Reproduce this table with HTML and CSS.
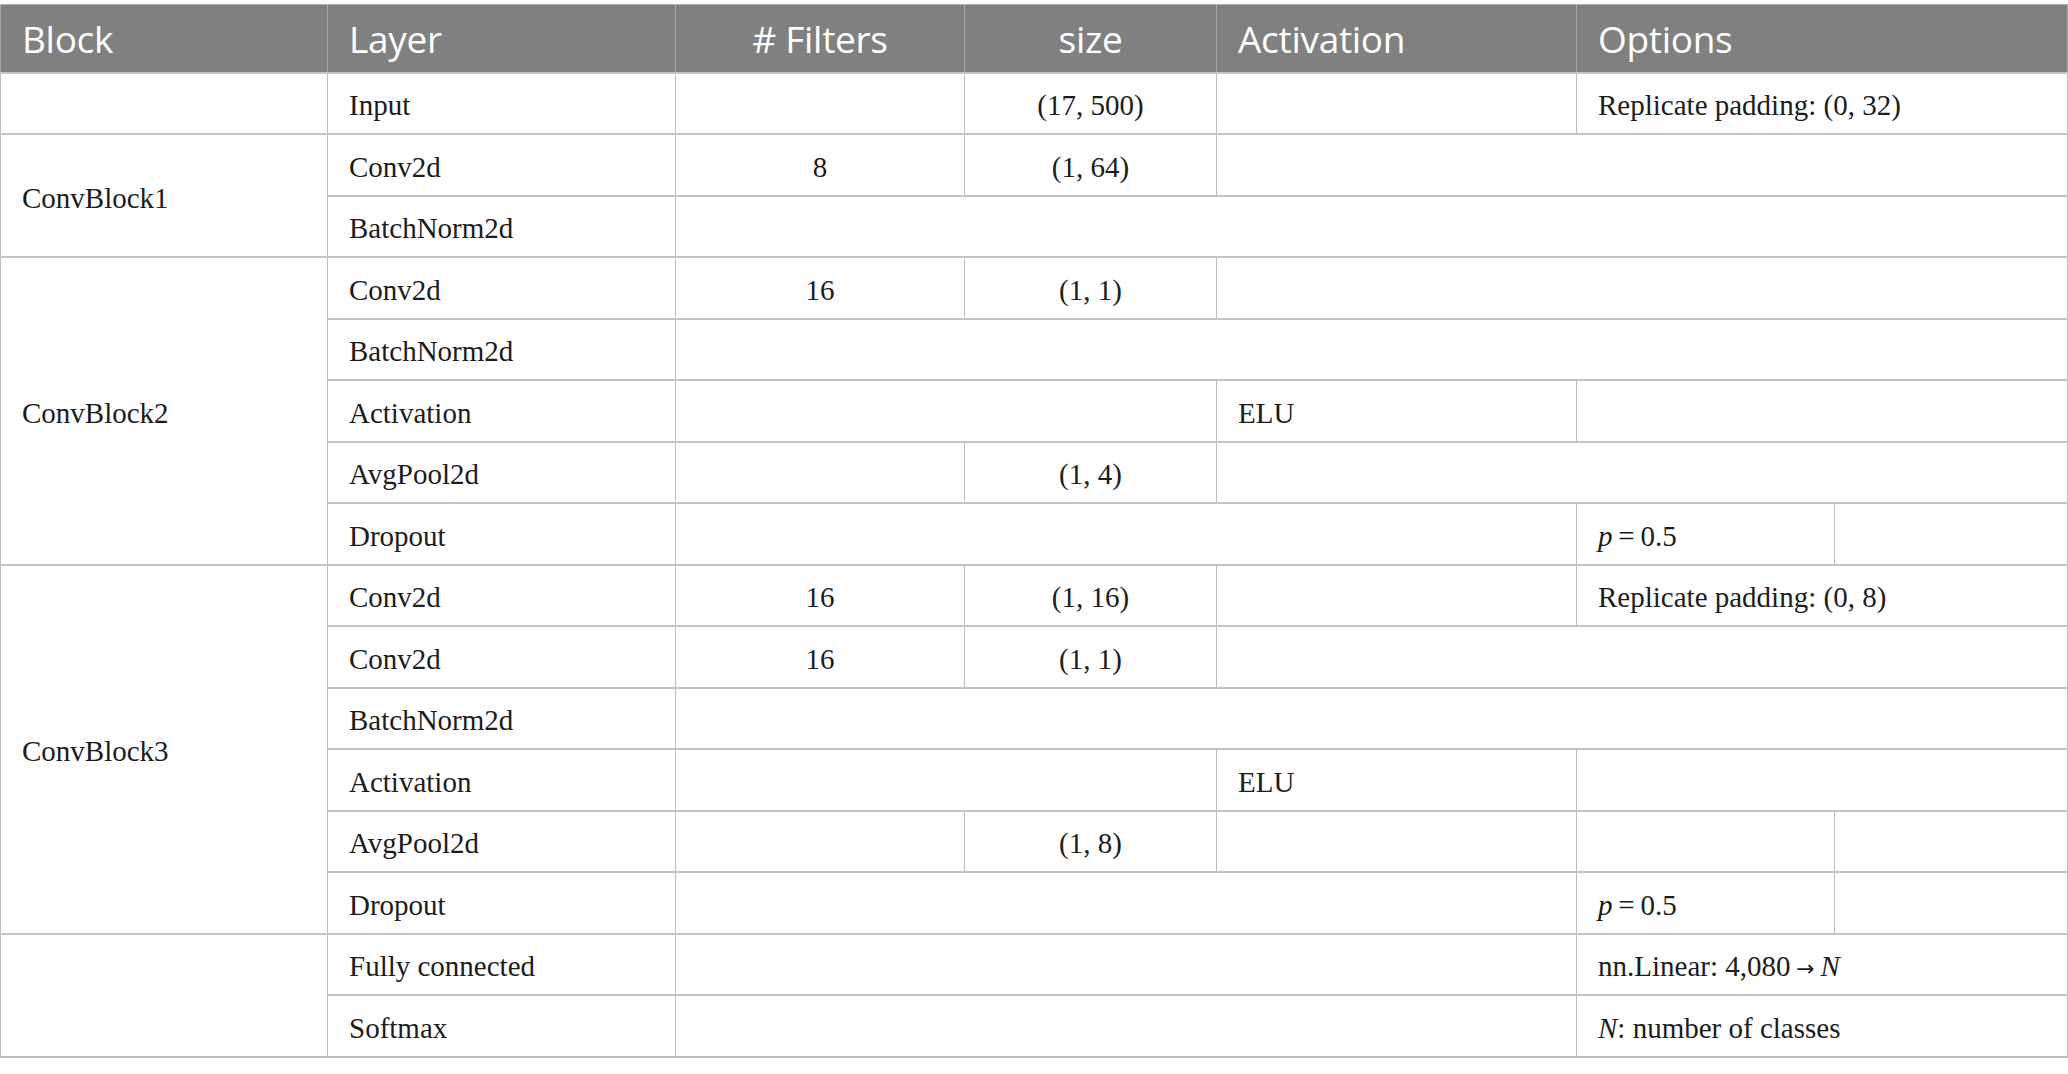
FILE: index.html
```html
<!DOCTYPE html>
<html lang="en">
<head>
<meta charset="utf-8">
<title>Network architecture</title>
<link rel="stylesheet" href="styles.css">
</head>
<body>
<table class="arch">
  <colgroup>
    <col class="c-block">
    <col class="c-layer">
    <col class="c-filters">
    <col class="c-size">
    <col class="c-act">
    <col class="c-opt1">
    <col class="c-opt2">
  </colgroup>
  <thead>
    <tr>
      <th>Block</th>
      <th>Layer</th>
      <th class="center"># Filters</th>
      <th class="center">size</th>
      <th>Activation</th>
      <th colspan="2">Options</th>
    </tr>
  </thead>
  <tbody>
    <tr>
      <td></td>
      <td>Input</td>
      <td></td>
      <td class="center">(17, 500)</td>
      <td></td>
      <td colspan="2">Replicate padding: (0, 32)</td>
    </tr>
    <tr>
      <td rowspan="2">ConvBlock1</td>
      <td>Conv2d</td>
      <td class="center">8</td>
      <td class="center">(1, 64)</td>
      <td colspan="3"></td>
    </tr>
    <tr>
      <td>BatchNorm2d</td>
      <td colspan="5"></td>
    </tr>
    <tr>
      <td rowspan="5">ConvBlock2</td>
      <td>Conv2d</td>
      <td class="center">16</td>
      <td class="center">(1, 1)</td>
      <td colspan="3"></td>
    </tr>
    <tr>
      <td>BatchNorm2d</td>
      <td colspan="5"></td>
    </tr>
    <tr>
      <td>Activation</td>
      <td colspan="2"></td>
      <td>ELU</td>
      <td colspan="2"></td>
    </tr>
    <tr>
      <td>AvgPool2d</td>
      <td></td>
      <td class="center">(1, 4)</td>
      <td colspan="3"></td>
    </tr>
    <tr>
      <td>Dropout</td>
      <td colspan="3"></td>
      <td><i>p</i>&#8201;=&#8201;0.5</td>
      <td></td>
    </tr>
    <tr>
      <td rowspan="6">ConvBlock3</td>
      <td>Conv2d</td>
      <td class="center">16</td>
      <td class="center">(1, 16)</td>
      <td></td>
      <td colspan="2">Replicate padding: (0, 8)</td>
    </tr>
    <tr>
      <td>Conv2d</td>
      <td class="center">16</td>
      <td class="center">(1, 1)</td>
      <td colspan="3"></td>
    </tr>
    <tr>
      <td>BatchNorm2d</td>
      <td colspan="5"></td>
    </tr>
    <tr>
      <td>Activation</td>
      <td colspan="2"></td>
      <td>ELU</td>
      <td colspan="2"></td>
    </tr>
    <tr>
      <td>AvgPool2d</td>
      <td></td>
      <td class="center">(1, 8)</td>
      <td></td>
      <td></td>
      <td></td>
    </tr>
    <tr>
      <td>Dropout</td>
      <td colspan="3"></td>
      <td><i>p</i>&#8201;=&#8201;0.5</td>
      <td></td>
    </tr>
    <tr>
      <td rowspan="2"></td>
      <td>Fully connected</td>
      <td colspan="3"></td>
      <td colspan="2">nn.Linear: 4,080&#8201;<span class="arrow">→</span>&#8201;<i>N</i></td>
    </tr>
    <tr>
      <td>Softmax</td>
      <td colspan="3"></td>
      <td colspan="2"><i>N</i>: number of classes</td>
    </tr>
  </tbody>
</table>
</body>
</html>
```

FILE: styles.css
```css
html, body {
  margin: 0;
  padding: 0;
  background: #ffffff;
}

body {
  padding-top: 4px;
}

.arch {
  width: 2067px;
  table-layout: fixed;
  border-collapse: collapse;
  border: 1px solid #b9b9b9;
  border-bottom: 2px solid #bdbdbd;
}

.c-block { width: 327px; }
.c-layer { width: 348px; }
.c-filters { width: 289px; }
.c-size { width: 252px; }
.c-act { width: 360px; }
.c-opt1 { width: 258px; }
.c-opt2 { width: 233px; }

.arch th {
  height: 66.5px;
  padding: 0 0 0 21px;
  background: #808080;
  color: #ffffff;
  font-family: "Open Sans", "Noto Sans", sans-serif;
  font-size: 37px;
  font-weight: 400;
  letter-spacing: -0.3px;
  text-align: left;
  vertical-align: middle;
  border: 1px solid #a9a9a9;
  border-top-color: #b3b3b3;
}

.arch th.center {
  text-align: center;
  padding: 0;
}

.arch td {
  height: 54.5px;
  padding: 5px 0 0 21px;
  font-family: "Liberation Serif", "Times New Roman", serif;
  font-size: 29px;
  color: #1c1c1c;
  text-align: left;
  vertical-align: middle;
  border: 1px solid #bcbcbc;
  white-space: nowrap;
}

.arch td.center {
  text-align: center;
  padding: 5px 0 0 0;
}

.arch tbody tr {
  border-top: 2px solid #c4c4c4;
}

.arrow {
  font-family: "DejaVu Sans", sans-serif;
  font-size: 22px;
}
```
